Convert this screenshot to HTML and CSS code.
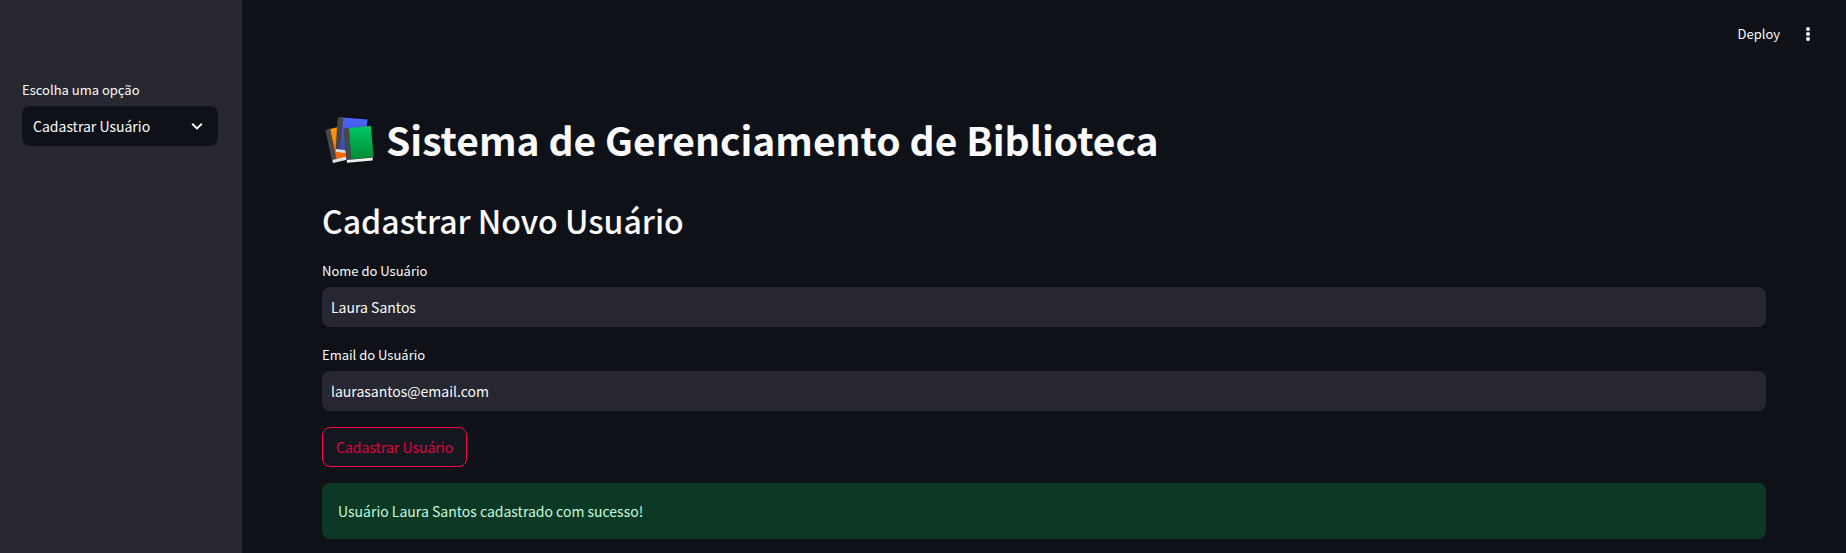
FILE: index.html
```
<!DOCTYPE html>
<html lang="pt-BR">
<head>
<meta charset="utf-8">
<meta name="viewport" content="width=device-width, initial-scale=1">
<title>Sistema de Gerenciamento de Biblioteca</title>
<link rel="stylesheet" href="styles.css">
</head>
<body>
<div class="app">
  <aside class="sidebar">
    <div class="field">
      <label class="label" for="option">Escolha uma opção</label>
      <div class="select">
        <select class="select-input" id="option">
          <option>Cadastrar Usuário</option>
        </select>
        <svg class="chevron" viewBox="0 0 12 12" aria-hidden="true"><path d="M1.200 3.800 6 8.400 10.800 3.800" fill="none" stroke="currentColor" stroke-width="2"/></svg>
      </div>
    </div>
  </aside>
  <div class="page">
    <header class="toolbar">
      <button class="deploy" type="button">Deploy</button>
      <button class="menu" type="button" aria-label="Menu">
        <svg class="dots" viewBox="0 0 16 16" aria-hidden="true" fill="currentColor"><circle cx="8" cy="3" r="2"/><circle cx="8" cy="8" r="2"/><circle cx="8" cy="13" r="2"/></svg>
      </button>
    </header>
    <main class="content">
      <h1 class="title">
        <svg class="books" viewBox="0 0 54 54" aria-hidden="true">
          <defs>
            <linearGradient id="orange" x1="0" y1="0" x2="0" y2="1"><stop offset="0" stop-color="#ff9a00"/><stop offset="1" stop-color="#ff5c0a"/></linearGradient>
            <linearGradient id="blue" x1="0" y1="0" x2="0" y2="1"><stop offset="0" stop-color="#4a67ff"/><stop offset="1" stop-color="#3247a8"/></linearGradient>
            <linearGradient id="green" x1="0" y1="0" x2="0" y2="1"><stop offset="0" stop-color="#00c866"/><stop offset="1" stop-color="#008a35"/></linearGradient>
          </defs>
          <path d="M8 13 20 10 27 42 14 45Z" fill="url(#orange)"/>
          <path d="M3.500 15Q3 14 5 13.500L8 12.500 14.500 43 10.500 47Z" fill="#474747"/>
          <path d="M10.500 44 26 40V43.500L11 47Z" fill="#e0e0e0"/>
          <path d="M20 1.500 45.500 3.500 42 38 15 34Z" fill="url(#blue)"/>
          <path d="M15.500 3Q15.700 1 17.500 1L21.500 1.300 18 33 13.500 36Z" fill="#474747"/>
          <path d="M14 33 27 34.500 26 37.500 13.500 35.700Z" fill="#dcdcdc"/>
          <path d="M27 12 49 10 51.500 41 29 43.500Z" fill="url(#green)"/>
          <path d="M21.500 14Q21.300 12.500 23 12.300L27 12 29 43 24.500 47Z" fill="#474747"/>
          <path d="M25 44 51 41.500 50.500 44.500 25 46.800Z" fill="#f0f0f0"/>
        </svg>
        <span>Sistema de Gerenciamento de Biblioteca</span>
      </h1>
      <h2 class="subtitle">Cadastrar Novo Usuário</h2>
      <form class="form">
        <div class="field">
          <label class="label" for="name">Nome do Usuário</label>
          <input class="input" id="name" type="text" value="Laura Santos">
        </div>
        <div class="field">
          <label class="label" for="email">Email do Usuário</label>
          <input class="input" id="email" type="text" value="laurasantos@email.com">
        </div>
        <button class="submit" type="button">Cadastrar Usuário</button>
        <div class="alert" role="status">Usuário Laura Santos cadastrado com sucesso!</div>
      </form>
    </main>
  </div>
</div>
</body>
</html>
```
FILE: styles.css
```
* {
  box-sizing: border-box;
}

body {
  margin: 0;
  background: #0e1117;
  color: #fafafa;
  font-family: "Noto Sans CJK JP", "Noto Sans", sans-serif;
  font-size: 14px;
  line-height: 24px;
}

button,
input,
select {
  margin: 0;
  border: 0;
  color: inherit;
  font: inherit;
}

.app {
  display: flex;
  min-height: 100vh;
}

.sidebar {
  flex: none;
  width: 242px;
  padding: 78px 24px 24px 22px;
  background: #262730;
}

.page {
  flex: 1;
  min-width: 0;
}

.toolbar {
  display: flex;
  align-items: center;
  justify-content: flex-end;
  gap: 16px;
  height: 68px;
  padding-right: 26px;
}

.deploy,
.menu {
  display: flex;
  align-items: center;
  padding: 0;
  background: transparent;
  font-size: 13px;
}

.menu {
  padding: 0 4px;
}

.dots {
  width: 16px;
  height: 16px;
}

.content {
  padding: 48px 80px 14px;
}

.title {
  display: flex;
  align-items: flex-start;
  gap: 10px;
  margin: 0;
  font-size: 39px;
  font-weight: 700;
  line-height: 46px;
}

.books {
  flex: none;
  width: 54px;
  height: 54px;
}

.subtitle {
  margin: 28px 0 17px;
  font-size: 32px;
  font-weight: 500;
  line-height: 44px;
}

.form {
  display: flex;
  flex-direction: column;
  gap: 16px;
}

.field {
  display: flex;
  flex-direction: column;
  gap: 4px;
}

.label {
  font-size: 13px;
}

.input {
  width: 100%;
  height: 40px;
  padding: 0 9px;
  border-radius: 8px;
  background: #262730;
}

.select {
  display: grid;
  align-items: center;
}

.select-input {
  grid-area: 1 / 1;
  width: 100%;
  height: 40px;
  padding: 0 40px 0 11px;
  border-radius: 8px;
  background: #0e1117;
  appearance: none;
}

.chevron {
  grid-area: 1 / 1;
  justify-self: end;
  width: 12px;
  height: 12px;
  margin-right: 15px;
  pointer-events: none;
}

.submit {
  align-self: flex-start;
  height: 40px;
  padding: 0 13px;
  border: 1px solid #ff004b;
  border-radius: 8px;
  background: #131720;
  color: #e4003f;
}

.alert {
  padding: 16px;
  border-radius: 8px;
  background: #0c3926;
  color: #c6f9dc;
}
```
